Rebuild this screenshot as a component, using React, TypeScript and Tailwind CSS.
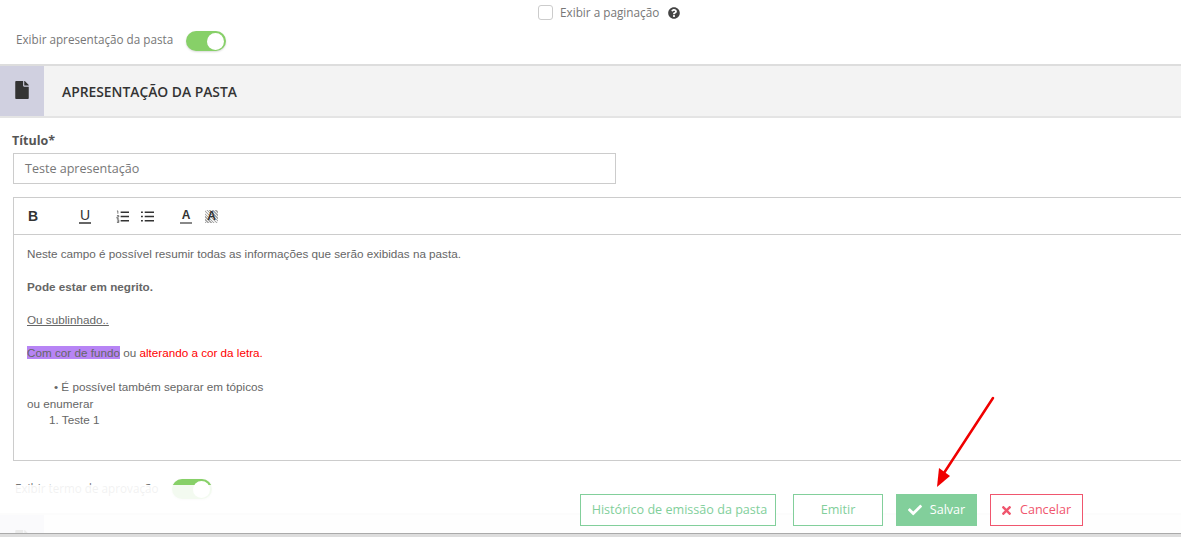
import { FaCheck, FaFile, FaQuestionCircle, FaTimes } from "react-icons/fa";

function Toggle({ className }: { className?: string }) {
  return (
    <span className={`flex h-5 w-10 items-center justify-end rounded-full bg-[#87d068] pr-[2px] shadow-[0_1px_2px_rgba(0,0,0,0.15)] ${className ?? ""}`}>
      <span className="size-[17px] rounded-full bg-white" />
    </span>
  );
}

function Toolbar() {
  return (
    <div className="flex h-[37px] items-center border-b border-[#ccc] text-[#333]">
      <span className="ml-[14px] w-[11px] font-['Liberation_Sans',sans-serif] text-[14px] font-bold leading-none">B</span>
      <span className="ml-[40px] w-[12px] border-b-2 border-[#666] text-center font-['Liberation_Sans',sans-serif] text-[14px] leading-[14px]">
        U
      </span>
      <svg className="ml-[25px]" width="13" height="13" viewBox="0 0 14 14" fill="none" stroke="#333">
        <path d="M5 2.500h9M5 7h9M5 11.500h9" strokeWidth="1.700" />
        <path d="M1 1h1v3M1 6h2v1.500H1V9h2M1 10.500h2v3H1M1 12h2" strokeWidth="0.700" />
      </svg>
      <svg className="ml-[12px]" width="13" height="13" viewBox="0 0 14 14" fill="none" stroke="#333" strokeWidth="1.700">
        <path d="M4 2.500h10M4 7h10M4 11.500h10M0 2.500h2M0 7h2M0 11.500h2" />
      </svg>
      <span className="ml-[26px] w-[12px] border-b-2 border-[#888] text-center font-['Liberation_Sans',sans-serif] text-[12px] font-bold leading-[13px]">
        A
      </span>
      <span className="ml-[13px] w-[13px] bg-[repeating-linear-gradient(45deg,#aaa_0,#aaa_1px,#eee_1px,#eee_2px)] text-center font-['Liberation_Sans',sans-serif] text-[12px] font-bold leading-[13px]">
        A
      </span>
    </div>
  );
}

function Editor() {
  return (
    <div className="h-[264px] w-[1180px] border border-[#ccc]">
      <Toolbar />
      <div className="px-[13px] pt-[11px] font-['Liberation_Sans',sans-serif] text-[11.700px] leading-[16.500px] text-[#666]">
        <p>Neste campo é possível resumir todas as informações que serão exibidas na pasta.</p>
        <p className="mt-[16.500px] font-bold">Pode estar em negrito.</p>
        <p className="mt-[16.500px] underline">Ou sublinhado..</p>
        <p className="mt-[16.500px]">
          <span className="bg-[#b784f5]">Com cor de fundo</span> ou{" "}
          <span className="text-[#ff0000]">alterando a cor da letra.</span>
        </p>
        <p className="mt-[17.500px] pl-[27px]">• É possível também separar em tópicos</p>
        <p>ou enumerar</p>
        <p className="pl-[22px]">1. Teste 1</p>
      </div>
    </div>
  );
}

function Footer() {
  return (
    <div className="absolute bottom-0 left-0 flex h-[52px] w-full items-start justify-end bg-white/90 pr-[98px] pt-[9px] font-['Open_Sans',sans-serif] text-[12.600px] shadow-[inset_0_-3px_0_#ddd,inset_0_-4px_0_#aaa]">
      <button className="h-[32px] w-[196px] border border-[#82cf9b] bg-white pl-[3px] text-[#82cf9b]">Histórico de emissão da pasta</button>
      <button className="ml-[17px] h-[32px] w-[90px] border border-[#82cf9b] bg-white text-[#82cf9b]">Emitir</button>
      <button className="ml-[13px] flex h-[32px] w-[81px] items-center justify-center gap-2 bg-[#82cf9b] text-white">
        <FaCheck className="size-[14px]" />
        Salvar
      </button>
      <button className="ml-[13px] flex h-[32px] w-[93px] items-center justify-center gap-[7px] border border-[#f0566e] bg-white pr-[2px] text-[#f0566e]">
        <FaTimes className="size-[13px]" />
        Cancelar
      </button>
    </div>
  );
}

function SectionHeader({ title }: { title: string }) {
  return (
    <div className="flex h-[54px] items-stretch border-y-2 border-t-[#ddd] border-b-[#e4e4e4] bg-[#f3f3f3]">
      <div className="flex w-[44px] items-center justify-center bg-[#d0d0e0]">
        <FaFile className="mb-[2px] size-[18px] text-[#333]" />
      </div>
      <div className="flex items-center pl-[18px] pt-[2px] text-[13.850px] font-semibold text-[#333]">{title}</div>
    </div>
  );
}

export default function App() {
  return (
    <div className="relative h-[537px] w-[1181px] overflow-hidden bg-white font-['Open_Sans',sans-serif] text-[#777]">
      <div className="flex h-[25px] items-center pl-[538px]">
        <span className="size-[15px] rounded-[3px] border border-[#ccc]" />
        <span className="ml-[7px] text-[11.750px]">Exibir a paginação</span>
        <FaQuestionCircle className="ml-[9px] size-[12px] text-[#444]" />
      </div>
      <div className="mt-[6px] flex items-center pl-[16px]">
        <span className="-mt-[2px] w-[170px] text-[11.700px]">Exibir apresentação da pasta</span>
        <Toggle />
      </div>
      <div className="mt-[13px]">
        <SectionHeader title="APRESENTAÇÃO DA PASTA" />
      </div>
      <div className="pl-[13px]">
        <label className="mt-[14px] -ml-px block text-[12.500px] font-bold leading-[18px] text-[#555]">Título*</label>
        <div className="mt-[3px] flex h-[31px] w-[603px] items-center border border-[#ccc] pl-[11px] pt-[1px] text-[12.550px]">Teste apresentação</div>
        <div className="mt-[13px]">
          <Editor />
        </div>
        <div className="-ml-px mt-[18px] flex items-center pl-[3px]">
          <span className="w-[157px] text-[11.700px]">Exibir termo de aprovação</span>
          <Toggle />
        </div>
      </div>
      <div className="mt-[14px]">
        <SectionHeader title="TERMO DE APROVAÇÃO" />
      </div>
      <Footer />
      <svg className="absolute left-[930px] top-[392px]" width="70" height="100" viewBox="0 0 70 100" fill="none">
        <path d="M63 6 L12 84" stroke="#f00000" strokeWidth="2.500" strokeLinecap="round" />
        <path d="M7 95 L9 76 L20 84 Z" fill="#f00000" />
      </svg>
    </div>
  );
}
